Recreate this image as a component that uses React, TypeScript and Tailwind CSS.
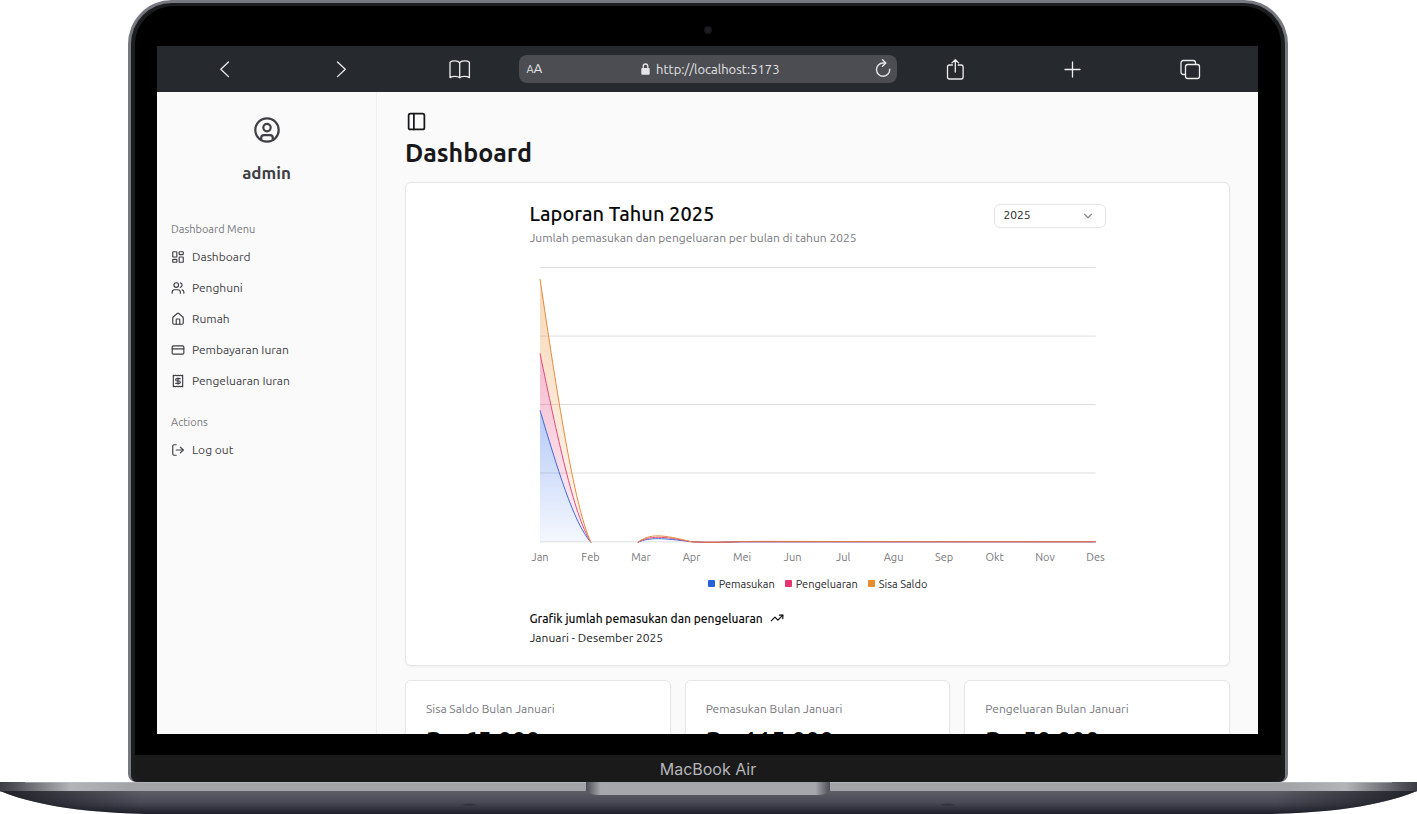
import React from "react";
import {
  ChevronDown,
  CreditCard,
  House,
  LayoutDashboard,
  LogOut,
  PanelLeft,
  TrendingUp,
  Users,
} from "lucide-react";

const months = ["Jan", "Feb", "Mar", "Apr", "Mei", "Jun", "Jul", "Agu", "Sep", "Okt", "Nov", "Des"];

const stats = [
  { label: "Sisa Saldo Bulan Januari", value: "Rp 65.000" },
  { label: "Pemasukan Bulan Januari", value: "Rp 115.000" },
  { label: "Pengeluaran Bulan Januari", value: "Rp 50.000" },
];

function ReceiptDollar() {
  return (
    <svg className="size-[14px]" viewBox="0 0 24 24" fill="none" stroke="currentColor" strokeWidth="2" strokeLinecap="round" strokeLinejoin="round" aria-hidden="true">
      <path d="M4 2v20l2-1 2 1 2-1 2 1 2-1 2 1 2-1 2 1V2l-2 1-2-1-2 1-2-1-2 1-2-1-2 1Z" />
      <path d="M16 8h-6a2 2 0 1 0 0 4h4a2 2 0 1 1 0 4H8" />
      <path d="M12 17.5v-11" />
    </svg>
  );
}

const menu = [
  { label: "Dashboard", icon: <LayoutDashboard size={14} /> },
  { label: "Penghuni", icon: <Users size={14} /> },
  { label: "Rumah", icon: <House size={14} /> },
  { label: "Pembayaran Iuran", icon: <CreditCard size={14} /> },
  { label: "Pengeluaran Iuran", icon: <ReceiptDollar /> },
];

function ToolButton({ label, children }: { label: string; children: React.ReactNode }) {
  return (
    <button type="button" aria-label={label} className="flex h-full items-center justify-center text-[#ececec]">
      <svg className="size-6" viewBox="0 0 24 24" fill="none" stroke="currentColor" strokeWidth="1.3" strokeLinecap="round" strokeLinejoin="round">
        {children}
      </svg>
    </button>
  );
}

function BrowserBar() {
  return (
    <header className="grid h-[46px] shrink-0 grid-cols-[1fr_1fr_1fr_378px_1fr_1fr_1fr] items-center bg-[#262a2e] px-[9px]">
      <ToolButton label="Back">
        <path d="M15.500 5 7.800 12.300l7.700 7.300" />
      </ToolButton>
      <ToolButton label="Forward">
        <path d="m7.500 5 7.800 7.300-7.800 7.300" />
      </ToolButton>
      <ToolButton label="Bookmarks">
        <path d="M11.700 5.800v15M11.700 5.800C10.200 3.600 4.500 3.300 2 5.300v15.300c2.800-1.700 8-1.500 9.700.3 1.700-1.800 6.900-2 9.700-.3V5.300c-2.500-2-8.200-1.700-9.700.5Z" />
      </ToolButton>
      <div className="grid h-7 grid-cols-[1fr_auto_1fr] items-center rounded-lg bg-[#4b4d52] px-2 text-[#e4e4e6]">
        <span className="flex items-baseline text-[13px]">
          <span className="text-[11px]">A</span>A
        </span>
        <label className="flex items-center gap-[6px] pl-[6px]">
          <svg className="h-3 w-[9px]" viewBox="0 0 9 12" fill="none" aria-hidden="true">
            <rect x="0.300" y="5" width="8.400" height="6.800" rx="1" fill="currentColor" />
            <path d="M2.200 5.500V3.300a2.300 2.300 0 0 1 4.600 0v2.200" stroke="currentColor" strokeWidth="1.300" />
          </svg>
          <input aria-label="Address" readOnly defaultValue="http://localhost:5173" className="w-[124px] bg-transparent text-[13px] leading-5 outline-none" />
        </label>
        <button type="button" aria-label="Reload" className="-mr-1 justify-self-end">
          <svg className="size-5" viewBox="0 0 20 20" fill="none" stroke="currentColor" strokeWidth="1.400" strokeLinecap="round" strokeLinejoin="round">
            <path d="M16.700 10.200A6.600 6.600 0 1 1 10.100 4h2.400" />
            <path d="M9.500.8 12.800 4 9.500 7.200" />
          </svg>
        </button>
      </div>
      <ToolButton label="Share">
        <path d="M9.400 8H6.500a2 2 0 0 0-2 2v10a2 2 0 0 0 2 2h11.600a2 2 0 0 0 2-2V10a2 2 0 0 0-2-2h-2.900M12.300 15V2.800M9 5.900l3.300-3.300 3.300 3.300" />
      </ToolButton>
      <ToolButton label="New tab">
        <path d="M4 12.500h15M11.500 5v15" />
      </ToolButton>
      <ToolButton label="Tabs">
        <rect x="7.500" y="7.500" width="14" height="14" rx="2.200" />
        <path d="M7 17.500H5.300a2.300 2.300 0 0 1-2.300-2.300V5.800a2.300 2.300 0 0 1 2.300-2.300h9.900a2.300 2.300 0 0 1 2.300 2.300v1.200" />
      </ToolButton>
    </header>
  );
}

function Sidebar() {
  return (
    <aside className="w-[220px] shrink-0 border-r border-[#efeff0] bg-[#fafafa] px-[14px] pt-[25px] text-[#3f3f46]">
      <div className="flex flex-col items-center">
        <svg className="size-[26px]" viewBox="0 0 26 26" fill="none" stroke="currentColor" strokeWidth="2.200" aria-hidden="true">
          <circle cx="13" cy="13" r="11.700" />
          <circle cx="13" cy="10.600" r="3.700" />
          <path d="M7.200 22.800v-1.900c0-1.600 1.200-2.700 2.700-2.700h6.200c1.500 0 2.700 1.100 2.700 2.700v1.900" />
        </svg>
        <p className="mt-[18px] text-[17px] leading-6 font-semibold">admin</p>
      </div>
      <h2 className="mt-8 text-[11px] leading-6 text-[#77777d]">Dashboard Menu</h2>
      <nav>
        {menu.map((item) => (
          <a key={item.label} href="#" className="flex h-[31px] items-center gap-[7px] text-[12px]">
            {item.icon}
            {item.label}
          </a>
        ))}
      </nav>
      <h2 className="mt-[14px] text-[11px] leading-6 text-[#77777d]">Actions</h2>
      <a href="#" className="flex h-[31px] items-center gap-[7px] text-[12px]">
        <LogOut size={14} />
        Log out
      </a>
    </aside>
  );
}

function AreaChart() {
  return (
    <svg className="mt-[14px] h-auto w-full overflow-visible" viewBox="0 0 577 300" role="img" aria-label="Laporan Tahun 2025">
      <defs>
        <linearGradient id="blue" x1="0" y1="0" x2="0" y2="1">
          <stop offset="0" stopColor="#2563eb" stopOpacity="0.340" />
          <stop offset="1" stopColor="#2563eb" stopOpacity="0.050" />
        </linearGradient>
        <linearGradient id="pink" x1="0" y1="0" x2="0" y2="1">
          <stop offset="0" stopColor="#e23670" stopOpacity="0.340" />
          <stop offset="1" stopColor="#e23670" stopOpacity="0.060" />
        </linearGradient>
        <linearGradient id="orange" x1="0" y1="0" x2="0" y2="1">
          <stop offset="0" stopColor="#e88c30" stopOpacity="0.340" />
          <stop offset="1" stopColor="#e88c30" stopOpacity="0.060" />
        </linearGradient>
      </defs>
      <path stroke="#dedede" d="M11 5.500h556.500M11 74.200h556.500M11 142.700h556.500M11 211.300h556.500M11 280.300h556.500" />
      <path fill="url(#orange)" d="M11 17C27.900 130 44.700 243 61.500 280 44.700 253.600 27.900 172.500 11 91.500Z" />
      <path fill="url(#pink)" d="M11 91.500C27.900 172.500 44.700 253.600 61.500 280 44.700 261.600 27.900 205 11 148.500Z" />
      <path fill="url(#blue)" d="M11 148.500C27.900 205 44.700 261.600 61.500 280H11Z" />
      <g fill="none" strokeWidth="1">
        <path stroke="#3f68d8" d="M11 148.500C27.900 205 44.700 261.600 62 280.800M109 280.800C121 275.500 134 276.500 162.500 280.200 179 281.300 196 280.600 213 280.300H567.500" />
        <path stroke="#e04a7c" d="M11 91.500C27.900 172.500 44.700 253.600 62 280.800M109 280.800C121 273.800 134 274.500 162.500 280.200 179 281.300 196 280.500 213 280.200H567.500" />
        <path stroke="#e07a44" d="M162.500 280.200C179 281.300 196 280.500 213 280 240 279.500 265 280.200 567.500 280.200" />
        <path stroke="#e58a3c" d="M11 17C27.900 130 44.700 243 62 280.800M109 280.800C121 271.500 134 273 162.500 280.200" />
      </g>
      <g fill="#77777d" fontSize="11" textAnchor="middle">
        {months.map((month, i) => (
          <text key={month} x={11 + i * 50.590} y="299">
            {month}
          </text>
        ))}
      </g>
    </svg>
  );
}

function Report() {
  return (
    <section className="rounded-md border border-[#e6e6e8] bg-white pt-[17px] pb-[18px] shadow-xs">
      <div className="mx-auto w-[70%]">
        <div className="flex items-start justify-between">
          <div>
            <h2 className="text-[20px] leading-7 font-medium text-[#09090b]">Laporan Tahun 2025</h2>
            <p className="text-[12px] leading-5 text-[#77777d]">Jumlah pemasukan dan pengeluaran per bulan di tahun 2025</p>
          </div>
          <div className="mt-1 grid items-center">
            <select aria-label="Tahun" defaultValue="2025" className="col-start-1 row-start-1 h-6 w-28 appearance-none rounded-md border border-[#e4e4e7] bg-white px-[9px] pb-[2px] text-[12px] leading-5 text-[#18181b]">
              <option>2025</option>
              <option>2024</option>
            </select>
            <ChevronDown size={14} className="pointer-events-none col-start-1 row-start-1 mr-[11px] justify-self-end text-[#8a8a90]" />
          </div>
        </div>
        <AreaChart />
        <ul className="mt-[14px] flex justify-center gap-[10px] text-[11px] leading-4 text-[#27272a]">
          <li className="flex items-center gap-1">
            <span className="size-[7px] rounded-[1px] bg-[#2662d9]" />
            Pemasukan
          </li>
          <li className="flex items-center gap-1">
            <span className="size-[7px] rounded-[1px] bg-[#e23670]" />
            Pengeluaran
          </li>
          <li className="flex items-center gap-1">
            <span className="size-[7px] rounded-[1px] bg-[#e88c30]" />
            Sisa Saldo
          </li>
        </ul>
        <p className="mt-[17px] flex items-center gap-[7px] text-[12px] leading-[19px] font-medium text-[#09090b]">
          Grafik jumlah pemasukan dan pengeluaran
          <TrendingUp size={14} />
        </p>
        <p className="text-[12px] leading-[19px] text-[#18181b]">Januari - Desember 2025</p>
      </div>
    </section>
  );
}

function Base() {
  return (
    <svg className="block h-8 w-full shrink-0" viewBox="0 0 1417 32" preserveAspectRatio="none" aria-hidden="true">
      <defs>
        <linearGradient id="under" x1="0" y1="0" x2="0" y2="1">
          <stop offset="0" stopColor="#5d5e66" />
          <stop offset="0.500" stopColor="#484954" />
          <stop offset="1" stopColor="#1d1e29" />
        </linearGradient>
        <linearGradient id="deck" x1="0" y1="0" x2="1" y2="0">
          <stop offset="0" stopColor="#3b3b44" />
          <stop offset="0.012" stopColor="#55565d" />
          <stop offset="0.050" stopColor="#b3b4b8" />
          <stop offset="0.090" stopColor="#a3a4a8" />
          <stop offset="0.910" stopColor="#a3a4a8" />
          <stop offset="0.950" stopColor="#b3b4b8" />
          <stop offset="0.988" stopColor="#55565d" />
          <stop offset="1" stopColor="#3b3b44" />
        </linearGradient>
        <linearGradient id="corner" x1="0" y1="0" x2="1" y2="0">
          <stop offset="0" stopColor="#16161e" stopOpacity="0.850" />
          <stop offset="0.100" stopColor="#16161e" stopOpacity="0" />
          <stop offset="0.900" stopColor="#16161e" stopOpacity="0" />
          <stop offset="1" stopColor="#16161e" stopOpacity="0.850" />
        </linearGradient>
        <linearGradient id="notch" x1="0" y1="0" x2="1" y2="0">
          <stop offset="0" stopColor="#4c4d56" />
          <stop offset="0.060" stopColor="#a6a7ac" />
          <stop offset="0.940" stopColor="#a6a7ac" />
          <stop offset="1" stopColor="#4c4d56" />
        </linearGradient>
      </defs>
      <path fill="url(#under)" d="M0 9C20 17 60 30 145 32H1272C1357 30 1397 17 1417 9Z" />
      <path fill="url(#corner)" d="M0 9C20 17 60 30 145 32H1272C1357 30 1397 17 1417 9Z" />
      <path fill="url(#deck)" d="M0 0H1417V9Q1415 10 1413 9H4Q1 10 0 9Z" />
      <path stroke="#c4c5c8" strokeOpacity="0.500" d="M25 .5H1392" />
      <path fill="url(#notch)" d="M586 0H830V9Q828 12 819 13H597Q588 12 586 9Z" />
      <path fill="#30313b" d="M462 23q8-2.500 15 0q-8 1.500-15 0M940 23q8-2.500 15 0q-8 1.500-15 0" />
    </svg>
  );
}

export default function App() {
  return (
    <div className="flex h-screen flex-col overflow-hidden bg-white font-['Ubuntu','Noto_Sans',sans-serif]">
      <div className="flex min-h-0 flex-1 flex-col pr-[129px] pl-32">
        <div className="flex min-h-0 flex-1 flex-col rounded-t-[44px] rounded-b-lg bg-[#77787f] px-[3px] pt-[3px]">
          <div className="flex min-h-0 flex-1 flex-col rounded-t-[41px] rounded-b-md bg-[#1c1d1f] px-1 pt-[3px]">
            <div className="flex min-h-0 flex-1 flex-col rounded-t-[38px] bg-black pr-[23px] pb-[21px] pl-[22px]">
              <div className="flex h-10 shrink-0 items-center justify-center pt-2">
                <span className="size-2 rounded-full border-2 border-[#17181a] bg-[#202124]" />
              </div>
              <div className="flex min-h-0 flex-1 flex-col overflow-hidden">
                <BrowserBar />
                <div className="flex min-h-0 flex-1 bg-[#fafafa]">
                  <Sidebar />
                  <main className="min-w-0 flex-1 overflow-hidden px-7 pt-[18px]">
                    <button type="button" aria-label="Toggle sidebar" className="flex h-[23px] w-[23px] items-center justify-center text-[#18181b]">
                      <PanelLeft size={21} />
                    </button>
                    <h1 className="mb-[9px] text-[25px] leading-10 font-semibold text-[#18181b]">Dashboard</h1>
                    <Report />
                    <div className="mt-[14px] grid grid-cols-3 gap-[14px]">
                      {stats.map((stat) => (
                        <section key={stat.label} className="rounded-md border border-[#e6e6e8] bg-white px-5 pt-[18px] pb-6 shadow-xs">
                          <h3 className="text-[12px] leading-5 text-[#77777d]">{stat.label}</h3>
                          <p className="mt-[6px] text-[25px] leading-8 font-bold text-[#09090b]">{stat.value}</p>
                        </section>
                      ))}
                    </div>
                  </main>
                </div>
              </div>
            </div>
            <div className="flex h-[27px] shrink-0 items-center justify-center rounded-b-xl bg-[#1a1a1a] font-['Inter',sans-serif] text-[16px] text-[#b5b5ba]">
              MacBook Air
            </div>
          </div>
        </div>
      </div>
      <Base />
    </div>
  );
}
